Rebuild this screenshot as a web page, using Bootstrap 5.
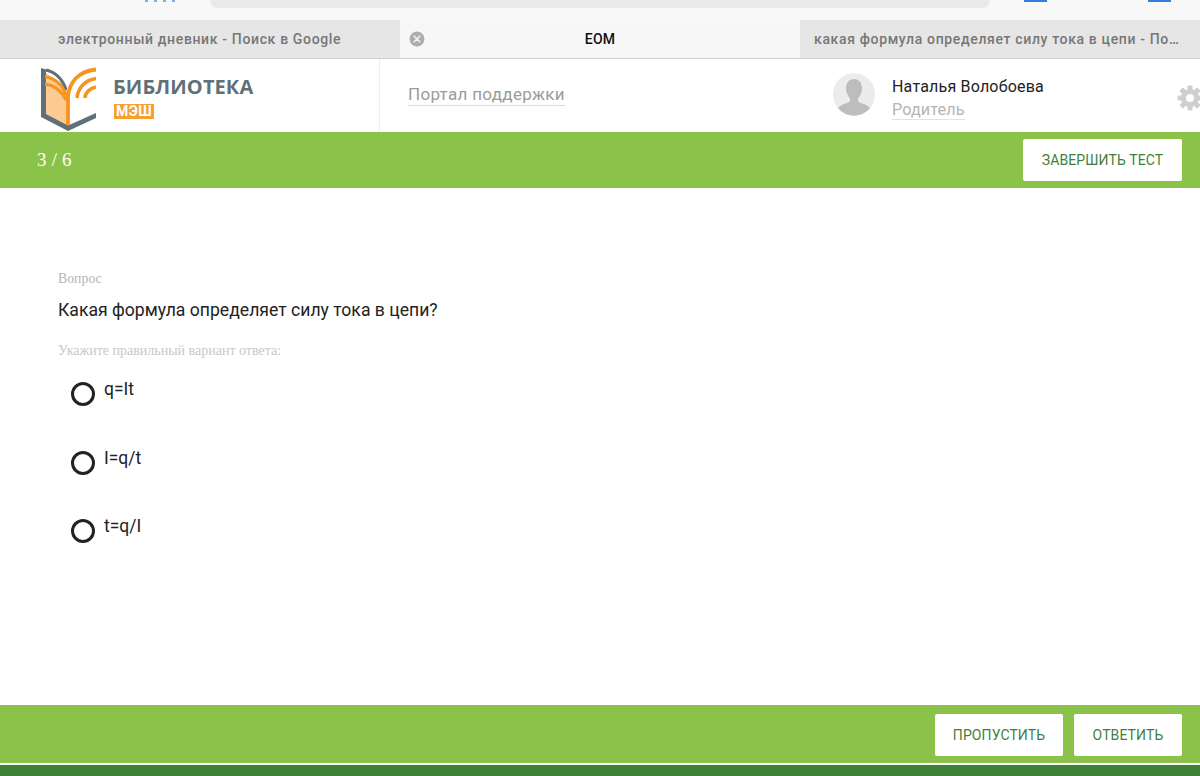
<!DOCTYPE html>
<html lang="ru">
<head>
<meta charset="utf-8">
<title>ЕОМ</title>
<link href="https://cdn.jsdelivr.net/npm/bootstrap@5.3.0/dist/css/bootstrap.min.css" rel="stylesheet">
<style>
html,body{height:776px;overflow:hidden}
body{font-family:Roboto,"Liberation Sans",sans-serif;background:#fff;color:#222}
.chrome-top{height:20px;background:#f8f8f8;padding-left:145px}
.addr-bar{width:780px;height:8px;background:#e9e9e9;border-radius:0 0 12px 12px;margin-left:33px;margin-right:34px}
.blue-mark{width:23px;height:2px;background:#2f7fe0}
.blue-mark-last{margin-left:101px}
.blue-dots{width:32px;height:2px;background:repeating-linear-gradient(90deg,#7fb2ee 0 3px,transparent 3px 9px)}
.tabs-row{height:39px;border-bottom:1px solid #cfcfcf;background:#e6e6e6}
.tab-item{width:400px;font-size:14px;font-weight:500;letter-spacing:.65px;color:#777;white-space:nowrap}
.tab-first{padding-left:58px}
.tab-active{background:#f7f7f7;color:#111;justify-content:center;position:relative;letter-spacing:.2px}
.tab-close{position:absolute;left:9px;top:11px;width:16px;height:16px}
.tab-last{padding-left:14px}
.head-row{height:73px}
.logo-cell{width:380px;height:73px;border-right:1px solid #eee;padding-left:40px;gap:15px}
.logo-svg{width:58px;height:66px;margin-top:8px}
.logo-name{font-family:"Open Sans",Roboto,sans-serif;font-weight:700;font-size:20px;line-height:24px;color:#5f7078;letter-spacing:.1px;margin-top:16px}
.logo-tag{display:inline-block;background:#f7a030;color:#fff;font-weight:700;font-size:14px;line-height:15px;padding:0 2px;letter-spacing:.4px;margin-left:1px;margin-top:0}
.portal-cell{padding-left:28px;padding-top:24px;width:453px}
.dotted-link{color:#9b9b9b;font-size:17px;line-height:21px;border-bottom:1px solid #dcdcdc;letter-spacing:.3px;display:inline-block}
.user-avatar{width:42px;height:43px;margin-top:14px}
.user-info{margin-left:17px;margin-top:17px}
.user-name{font-size:16px;line-height:22px;color:#222;letter-spacing:.2px}
.user-role{font-size:16.200px;line-height:19px;color:#b5b5b5;letter-spacing:.1px;border-bottom:1px solid #e2e2e2;display:inline-block;margin-top:2px}
.gear-wrap{margin-left:auto;width:23px;margin-top:26px;overflow:hidden}
.gear-svg{width:26px;height:26px;display:block}
.green-bar{background:#8bc34a}
.bar-top{height:56px;padding:7px 18px 0 37px}
.bar-count{font-family:"Liberation Serif",serif;font-size:19px;color:#fff;line-height:42px;letter-spacing:.2px}
.bar-bottom{height:58px;padding:9px 18px 0 0;gap:11px}
.white-btn{background:#fff;color:#3f7f3c;font-size:14px;line-height:18px;padding:0;height:42px;border:0;border-radius:2px;letter-spacing:.1px}
.white-btn:hover{background:#fff;color:#3f7f3c}
.btn-finish{width:159px}
.btn-skip{width:128px}
.btn-answer{width:108px}
.quiz-area{flex:1 1 auto;padding:83px 58px 0}
.q-label{font-family:"Liberation Serif",serif;font-size:13.800px;line-height:16px;color:#b5b5b5}
.q-text{font-size:17.600px;line-height:24px;margin-top:11px;color:#222}
.q-hint{font-family:"Liberation Serif",serif;font-size:14px;line-height:16px;color:#c8c8c8;margin-top:21px}
.answer-row{margin-left:13px;height:24px;gap:9px;margin-bottom:44.500px}
.answer-ring{width:24px;height:24px;border:3px solid #222;border-radius:50%;margin-top:3px;flex:none}
.answer-text{font-size:17.500px;line-height:20px;color:#222}
.answers{margin-top:20px}
.foot-gap{height:2px;background:#fff}
.foot-dark{height:11px;background:#3d8136}
</style>
</head>
<body class="d-flex flex-column">
<div class="chrome-top d-flex flex-shrink-0">
  <div class="blue-dots"></div>
  <div class="addr-bar"></div>
  <div class="blue-mark"></div>
  <div class="blue-mark blue-mark-last"></div>
</div>
<div class="tabs-row d-flex flex-shrink-0">
  <div class="tab-item tab-first d-flex align-items-center">электронный дневник - Поиск в Google</div>
  <div class="tab-item tab-active d-flex align-items-center">
    <svg class="tab-close" viewBox="0 0 16 16"><circle cx="8" cy="8" r="7.5" fill="#adadad"/><path d="M5.2 5.2l5.6 5.6M10.8 5.2l-5.6 5.6" stroke="#f2f2f2" stroke-width="1.6" stroke-linecap="round"/></svg>
    ЕОМ
  </div>
  <div class="tab-item tab-last d-flex align-items-center">какая формула определяет силу тока в цепи - По…</div>
</div>
<header class="head-row d-flex flex-shrink-0">
  <div class="logo-cell d-flex">
    <svg class="logo-svg" viewBox="40 67 58 66">
      <path d="M46 73L67 87V126L46 114Z" fill="#fdca93"/>
      <path d="M41 68L46 69.5V114L68 125.5L96 113V118L68 131L41 117Z" fill="#5f7078"/>
      <path d="M46 70C55 72 63 79 66 90" fill="none" stroke="#5f7078" stroke-width="3"/>
      <path d="M45 77C54 78 62 84 66 95M45 84C53 85 61 90 66 100" fill="none" stroke="#f7941d" stroke-width="3"/>
      <path d="M68 125V97C69 83 78 71 96 69.5" fill="none" stroke="#f7941d" stroke-width="3.8"/>
      <path d="M77 98C78 88 85 80 96 78.5" fill="none" stroke="#f7941d" stroke-width="3.6"/>
      <path d="M85 98C85 93 90 88 96 87" fill="none" stroke="#f7941d" stroke-width="3.6"/>
    </svg>
    <div>
      <div class="logo-name">БИБЛИОТЕКА</div>
      <div class="logo-tag">МЭШ</div>
    </div>
  </div>
  <div class="portal-cell"><span class="dotted-link">Портал поддержки</span></div>
  <svg class="user-avatar" viewBox="0 0 42 43"><ellipse cx="21" cy="21.5" rx="21" ry="21.5" fill="#ececec"/><path d="M21 6c5 0 8 4 8 9.500 0 4-2 7.500-4 10v3c3 2 9 2.500 12 6.500-4 5-10 7.500-16 7.500s-12-2.500-16-7.500c3-4 9-4.500 12-6.500v-3c-2-2.500-4-6-4-10C13 10 16 6 21 6z" fill="#bdbdbd"/></svg>
  <div class="user-info">
    <div class="user-name">Наталья Волобоева</div>
    <div class="user-role">Родитель</div>
  </div>
  <div class="gear-wrap">
    <svg class="gear-svg" viewBox="0 0 26 26"><g fill="#cfcfcf"><circle cx="13" cy="13" r="9"/><rect x="10.500" y="0.500" width="5" height="25" rx="1"/><rect x="10.500" y="0.500" width="5" height="25" rx="1" transform="rotate(45 13 13)"/><rect x="10.500" y="0.500" width="5" height="25" rx="1" transform="rotate(90 13 13)"/><rect x="10.500" y="0.500" width="5" height="25" rx="1" transform="rotate(135 13 13)"/></g><circle cx="13" cy="13" r="4" fill="#fff"/></svg>
  </div>
</header>
<div class="green-bar bar-top d-flex justify-content-between flex-shrink-0">
  <div class="bar-count">3 / 6</div>
  <button type="button" class="btn white-btn btn-finish">ЗАВЕРШИТЬ ТЕСТ</button>
</div>
<main class="quiz-area">
  <div class="q-label">Вопрос</div>
  <div class="q-text">Какая формула определяет силу тока в цепи?</div>
  <div class="q-hint">Укажите правильный вариант ответа:</div>
  <div class="answers">
    <div class="answer-row d-flex"><span class="answer-ring"></span><span class="answer-text">q=It</span></div>
    <div class="answer-row d-flex"><span class="answer-ring"></span><span class="answer-text">I=q/t</span></div>
    <div class="answer-row d-flex"><span class="answer-ring"></span><span class="answer-text">t=q/I</span></div>
  </div>
</main>
<div class="green-bar bar-bottom d-flex justify-content-end flex-shrink-0">
  <button type="button" class="btn white-btn btn-skip">ПРОПУСТИТЬ</button>
  <button type="button" class="btn white-btn btn-answer">ОТВЕТИТЬ</button>
</div>
<div class="foot-gap flex-shrink-0"></div>
<div class="foot-dark flex-shrink-0"></div>
<script src="https://cdn.jsdelivr.net/npm/bootstrap@5.3.0/dist/js/bootstrap.bundle.min.js"></script>
</body>
</html>
